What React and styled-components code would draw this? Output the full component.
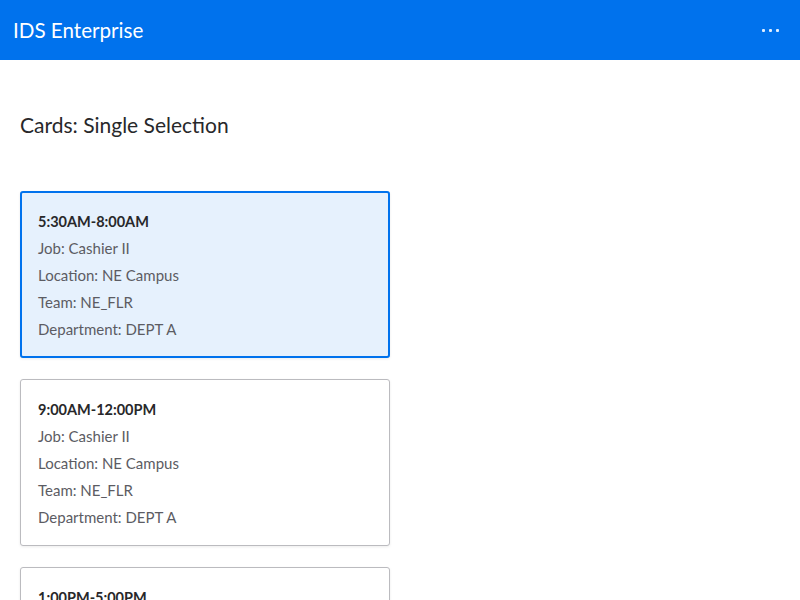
import React from 'react'
import styled, { createGlobalStyle } from 'styled-components'

const GlobalStyle = createGlobalStyle`
  html, body { margin: 0; padding: 0; background: #fff; }
  body { font-family: Lato, "Noto Sans", sans-serif; }
`

const Header = styled.header`
  height: 60px;
  background: #0072ed;
  display: flex;
  align-items: center;
  justify-content: space-between;
  padding: 0 13px;
  color: #fff;
`

const AppTitle = styled.h1`
  margin: 0;
  font-size: 20.6px;
  font-weight: 400;
`

const MoreButton = styled.button`
  border: 0;
  background: transparent;
  padding: 0 8px;
  display: flex;
  gap: 4px;
  cursor: pointer;
`

const Dot = styled.span`
  width: 3px;
  height: 3px;
  background: #dfeeff;
  border-radius: 1px;
`

const Main = styled.main`
  padding: 51px 20px 0;
`

const PageTitle = styled.h2`
  margin: 0 0 52px;
  font-size: 21px;
  font-weight: 400;
  color: #28282a;
  line-height: 28px;
`

const CardList = styled.div`
  display: flex;
  flex-direction: column;
  gap: 21px;
`

const Card = styled.div`
  box-sizing: border-box;
  width: 370px;
  height: 167px;
  padding: ${p => (p.selected ? '15px 16px 13px' : '16px 17px 14px')};
  border: ${p => (p.selected ? '2px solid #0072ed' : '1px solid #bbbbbf')};
  border-radius: 3px;
  background: ${p => (p.selected ? '#e6f1fd' : '#fff')};
  box-shadow: 0 1px 3px rgba(0, 0, 0, 0.08);
  cursor: pointer;
`

const Time = styled.div`
  font-size: 14.5px;
  line-height: 27px;
  font-weight: 700;
  color: #28282a;
`

const Detail = styled.div`
  font-size: 15px;
  line-height: 27px;
  color: #5c5c63;
`

const shifts = [
  { time: '5:30AM-8:00AM', selected: true },
  { time: '9:00AM-12:00PM' },
  { time: '1:00PM-5:00PM' },
]

export default function App() {
  return (
    <>
      <GlobalStyle />
      <Header>
        <AppTitle>IDS Enterprise</AppTitle>
        <MoreButton aria-label='More'>
          <Dot /><Dot /><Dot />
        </MoreButton>
      </Header>
      <Main>
        <PageTitle>Cards: Single Selection</PageTitle>
        <CardList>
          {shifts.map(s => (
            <Card key={s.time} selected={s.selected}>
              <Time>{s.time}</Time>
              <Detail>Job: Cashier II</Detail>
              <Detail>Location: NE Campus</Detail>
              <Detail>Team: NE_FLR</Detail>
              <Detail>Department: DEPT A</Detail>
            </Card>
          ))}
        </CardList>
      </Main>
    </>
  )
}
